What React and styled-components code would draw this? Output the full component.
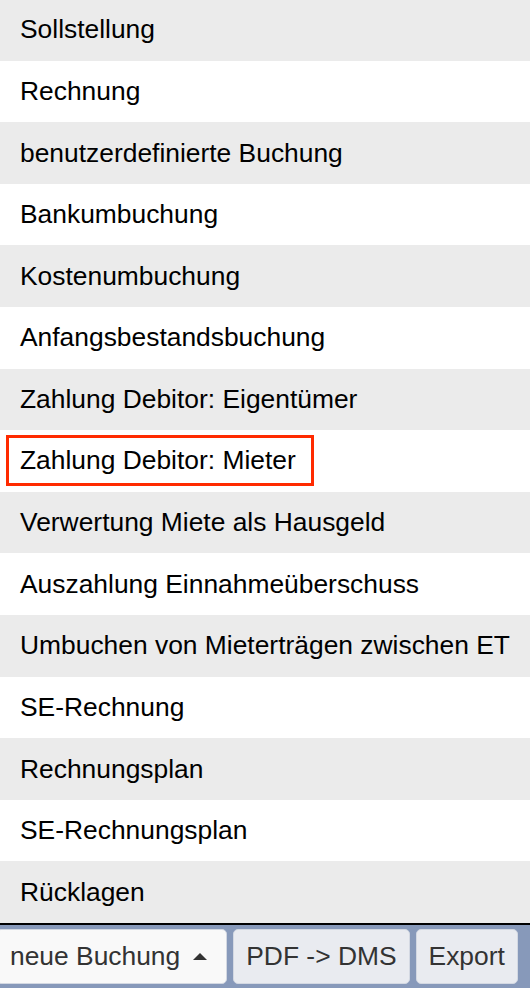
import React from 'react';
import styled, { createGlobalStyle } from 'styled-components';

const bookingTypes = [
  'Sollstellung',
  'Rechnung',
  'benutzerdefinierte Buchung',
  'Bankumbuchung',
  'Kostenumbuchung',
  'Anfangsbestandsbuchung',
  'Zahlung Debitor: Eigentümer',
  'Zahlung Debitor: Mieter',
  'Verwertung Miete als Hausgeld',
  'Auszahlung Einnahmeüberschuss',
  'Umbuchen von Mieterträgen zwischen ET',
  'SE-Rechnung',
  'Rechnungsplan',
  'SE-Rechnungsplan',
  'Rücklagen',
];

const selected = 'Zahlung Debitor: Mieter';

const GlobalStyle = createGlobalStyle`
  html, body {
    margin: 0;
    padding: 0;
    background: #fff;
    font-family: "Liberation Sans", Arial, Helvetica, sans-serif;
  }
`;

const App = () => (
  <>
    <GlobalStyle />
    <Page>
      <Menu>
        {bookingTypes.map((label, i) => (
          <Item key={label} odd={i % 2 === 1}>
            <Label highlighted={label === selected}>{label}</Label>
          </Item>
        ))}
      </Menu>
      <Toolbar>
        <Button primary>
          neue Buchung <Caret />
        </Button>
        <Button>PDF -&gt; DMS</Button>
        <Button>Export</Button>
      </Toolbar>
    </Page>
  </>
);

const Page = styled.div`
  width: 530px;
  height: 988px;
  display: flex;
  flex-direction: column;
  overflow: hidden;
`;

// list is scrolled slightly, so the top row is clipped by a pixel or two
const Menu = styled.div`
  height: 923px;
  display: flex;
  flex-direction: column;
  justify-content: flex-end;
  overflow: hidden;
`;

const Item = styled.div`
  flex: 0 0 61.6px;
  display: flex;
  align-items: center;
  padding-left: 20px;
  background: ${props => (props.odd ? '#ffffff' : '#ebebeb')};
  color: #000;
  font-size: 26.4px;
`;

const Label = styled.span`
  display: inline-block;
  line-height: 45px;
  ${props =>
    props.highlighted &&
    `
    margin-left: -14px;
    margin-top: -2px;
    padding: 0 15px 0 11px;
    border: 3px solid #ff2a00;
  `}
`;

const Toolbar = styled.div`
  flex: 1;
  display: flex;
  align-items: flex-start;
  gap: 6px;
  padding: 4px 0 0 0;
  background: #8799ba;
  border-top: 2px solid #000;
`;

const Button = styled.button`
  height: 55px;
  display: flex;
  align-items: center;
  padding: 0 12px;
  font-family: inherit;
  font-size: 26.4px;
  color: #333;
  background: ${props => (props.primary ? '#f9f9f9' : '#e9ebf0')};
  border: 1px solid #d3d8e2;
  border-radius: 5px;
  ${props => props.primary && 'margin-left: -4px; padding-left: 13px; padding-right: 19px;'}
`;

const Caret = styled.span`
  display: inline-block;
  width: 0;
  height: 0;
  margin-left: 13px;
  border-left: 7px solid transparent;
  border-right: 7px solid transparent;
  border-bottom: 7px solid #333;
`;

export default App;
